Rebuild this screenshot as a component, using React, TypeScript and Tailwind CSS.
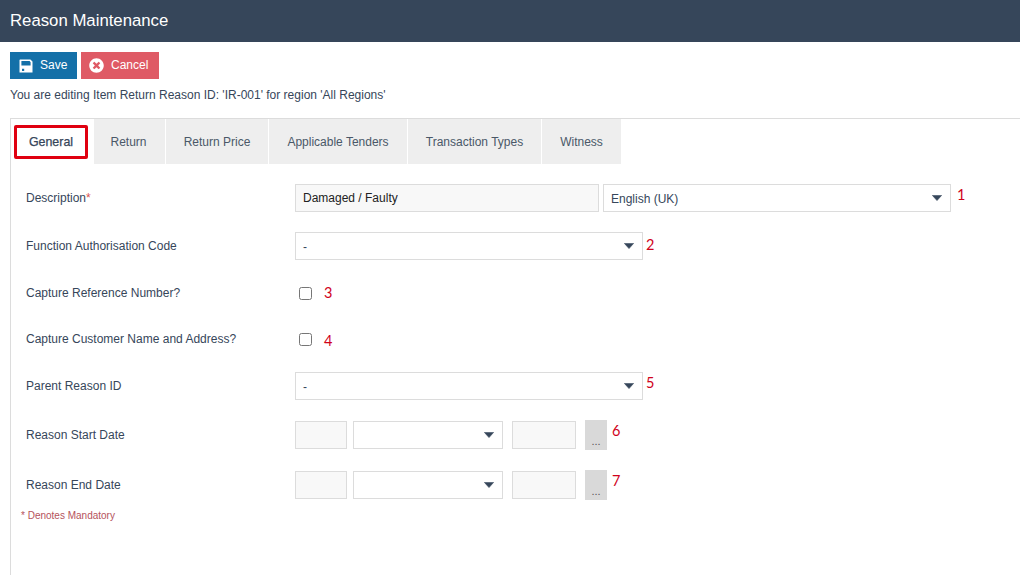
import type { ReactNode } from 'react';
import { FaTimesCircle } from 'react-icons/fa';

const tabs = [
  { label: 'Return', width: 'w-[71px] pr-[2px]' },
  { label: 'Return Price', width: 'w-[102px]' },
  { label: 'Applicable Tenders', width: 'w-[138px]' },
  { label: 'Transaction Types', width: 'w-[133px]' },
  { label: 'Witness', width: 'w-[79px]' },
];

function Caret() {
  return (
    <svg width="10" height="6" viewBox="0 0 10 6" className="shrink-0">
      <path d="M0.4 0.4h9.2L5 5.6z" fill="#36465a" stroke="#36465a" strokeWidth="0.6" strokeLinejoin="round" />
    </svg>
  );
}

function SaveIcon() {
  return (
    <svg width="14" height="14" viewBox="0 0 14 14" className="shrink-0">
      <path
        fillRule="evenodd"
        d="M1 0.5h10.4L13.5 2.6V13.5H0.5V1zM2.4 2V6.6H11.6V3.2L10.6 2zM3 9.8V12H5.2V9.8z"
        fill="#fff"
      />
    </svg>
  );
}

function Select({ value, width }: { value?: string; width: string }) {
  return (
    <div className={`${width} h-7 shrink-0 flex items-center justify-between pl-[7px] pr-[8px] bg-white border border-[#dcdcdc] text-[12px] text-[#36465a]`}>
      <span className="pt-px">{value}</span>
      <Caret />
    </div>
  );
}

function Num({ children }: { children: ReactNode }) {
  return <span className="ml-[3px] text-[14.5px] leading-none text-[#d0021b] font-['Lato',sans-serif]">{children}</span>;
}

function Row({ label, mt, children }: { label: ReactNode; mt: string; children: ReactNode }) {
  return (
    <div className={`flex items-center h-7 ${mt}`}>
      <div className="w-[269px] shrink-0 text-[12px] text-[#36465a]">{label}</div>
      {children}
    </div>
  );
}

function DateFields({ num }: { num: string }) {
  return (
    <div className="flex items-center">
      <div className="w-[52px] h-7 bg-[#f8f8f8] border border-[#dcdcdc]" />
      <div className="ml-[6px]">
        <Select width="w-[150px]" />
      </div>
      <div className="ml-[9px] w-16 h-7 bg-[#f8f8f8] border border-[#dcdcdc]" />
      <div className="ml-[9px] w-[22px] h-[30px] bg-[#d9d9d9] flex items-end justify-center pb-[3px] text-[11px] leading-none text-[#555]">...</div>
      <span className="ml-[2px] mb-[9px]">
        <Num>{num}</Num>
      </span>
    </div>
  );
}

export default function App() {
  return (
    <div className="w-[1020px] h-[575px] overflow-hidden bg-white font-['Liberation_Sans',Arial,sans-serif]">
      <div className="h-[42px] bg-[#36465a] flex items-center pl-[10px] text-[16.75px] text-white">Reason Maintenance</div>

      <div className="flex gap-1 pl-[10px] pt-[10px]">
        <button className="w-[67px] h-[27px] bg-[#1470a8] text-white text-[12px] flex items-center pl-[9px] gap-2">
          <SaveIcon />
          <span className="mb-px -ml-px">Save</span>
        </button>
        <button className="w-[78px] h-[27px] bg-[#df5a65] text-white text-[12px] flex items-center pl-2 gap-[7px]">
          <FaTimesCircle size={15} />
          <span className="mb-px">Cancel</span>
        </button>
      </div>

      <p className="mt-[9px] pl-[10px] text-[12px] leading-[14px] text-[#36465a]">
        You are editing Item Return Reason ID: 'IR-001' for region 'All Regions'
      </p>

      <div className="mt-4 ml-[10px] h-[457px] border-l border-t border-[#dcdcdc]">
        <div className="flex h-[45px]">
          <div className="w-[82px] h-full flex items-center">
            <div className="ml-[3px] w-[74px] h-[34px] pt-px border-[3px] border-[#e00010] rounded-[2px] flex items-center justify-center text-[12.4px] [-webkit-text-stroke:0.25px_#36465a] text-[#36465a]">
              General
            </div>
          </div>
          {tabs.map((tab) => (
            <div key={tab.label} className={`${tab.width} ml-px h-full bg-[#eeeeee] flex items-center justify-center text-[12px] text-[#4a5868]`}>
              {tab.label}
            </div>
          ))}
        </div>

        <div className="pl-[15px]">
          <Row
            mt="mt-5"
            label={
              <>
                Description<span className="text-[#d9534f]">*</span>
              </>
            }
          >
            <input
              readOnly
              value="Damaged / Faulty"
              className="w-[304px] h-7 pl-[7px] bg-[#f8f8f8] border border-[#dcdcdc] text-[12px] text-[#222] outline-none"
            />
            <div className="ml-1">
              <Select value="English (UK)" width="w-[348px]" />
            </div>
            <span className="ml-[3px] mb-[6px]">
              <Num>1</Num>
            </span>
          </Row>

          <Row mt="mt-5" label="Function Authorisation Code">
            <Select value="-" width="w-[348px]" />
            <span className="mb-[3px]">
              <Num>2</Num>
            </span>
          </Row>

          <Row mt="mt-[19px]" label="Capture Reference Number?">
            <input type="checkbox" className="ml-1 w-[13px] h-[13px]" />
            <span className="ml-[9px]">
              <Num>3</Num>
            </span>
          </Row>

          <Row mt="mt-[18px]" label="Capture Customer Name and Address?">
            <input type="checkbox" className="ml-1 w-[13px] h-[13px]" />
            <span className="ml-[9px] mt-[3px]">
              <Num>4</Num>
            </span>
          </Row>

          <Row mt="mt-[19px]" label="Parent Reason ID">
            <Select value="-" width="w-[348px]" />
            <span className="mb-[6px]">
              <Num>5</Num>
            </span>
          </Row>

          <Row mt="mt-[21px]" label="Reason Start Date">
            <DateFields num="6" />
          </Row>

          <Row mt="mt-[22px]" label="Reason End Date">
            <DateFields num="7" />
          </Row>

          <p className="mt-[11px] -ml-[5px] text-[10px] leading-[11px] text-[#b5525c]">* Denotes Mandatory</p>
        </div>
      </div>
    </div>
  );
}
